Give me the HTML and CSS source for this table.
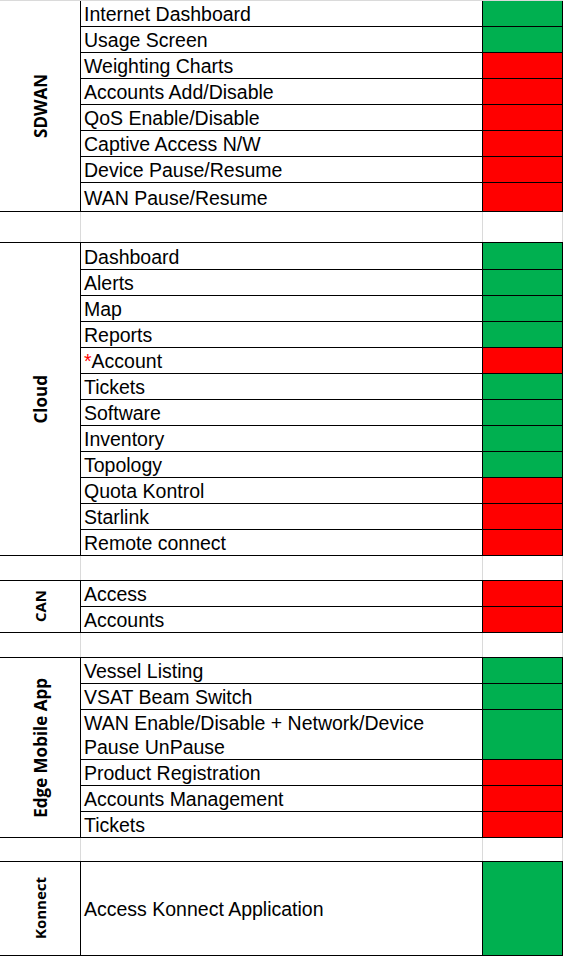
FILE: index.html
```html
<!DOCTYPE html>
<html>
<head>
<meta charset="utf-8">
<link rel="stylesheet" href="styles.css">
</head>
<body>
<div class="sheet">
  <section class="group">
    <div class="label"><span>SDWAN</span></div>
    <div class="rows">
      <div class="row"><div class="item">Internet Dashboard</div><div class="status ok"></div></div>
      <div class="row"><div class="item">Usage Screen</div><div class="status ok"></div></div>
      <div class="row"><div class="item">Weighting Charts</div><div class="status no"></div></div>
      <div class="row"><div class="item">Accounts Add/Disable</div><div class="status no"></div></div>
      <div class="row"><div class="item">QoS Enable/Disable</div><div class="status no"></div></div>
      <div class="row"><div class="item">Captive Access N/W</div><div class="status no"></div></div>
      <div class="row"><div class="item">Device Pause/Resume</div><div class="status no"></div></div>
      <div class="row h29"><div class="item">WAN Pause/Resume</div><div class="status no"></div></div>
    </div>
  </section>
  <div class="spacer h31"><div></div><div></div><div></div></div>
  <section class="group">
    <div class="label"><span>Cloud</span></div>
    <div class="rows">
      <div class="row h27"><div class="item">Dashboard</div><div class="status ok"></div></div>
      <div class="row"><div class="item">Alerts</div><div class="status ok"></div></div>
      <div class="row"><div class="item">Map</div><div class="status ok"></div></div>
      <div class="row"><div class="item">Reports</div><div class="status ok"></div></div>
      <div class="row"><div class="item"><span class="star">*</span>Account</div><div class="status no"></div></div>
      <div class="row"><div class="item">Tickets</div><div class="status ok"></div></div>
      <div class="row"><div class="item">Software</div><div class="status ok"></div></div>
      <div class="row"><div class="item">Inventory</div><div class="status ok"></div></div>
      <div class="row"><div class="item">Topology</div><div class="status ok"></div></div>
      <div class="row"><div class="item">Quota Kontrol</div><div class="status no"></div></div>
      <div class="row"><div class="item">Starlink</div><div class="status no"></div></div>
      <div class="row"><div class="item">Remote connect</div><div class="status no"></div></div>
    </div>
  </section>
  <div class="spacer h25"><div></div><div></div><div></div></div>
  <section class="group">
    <div class="label small"><span>CAN</span></div>
    <div class="rows">
      <div class="row"><div class="item">Access</div><div class="status no"></div></div>
      <div class="row"><div class="item">Accounts</div><div class="status no"></div></div>
    </div>
  </section>
  <div class="spacer h25"><div></div><div></div><div></div></div>
  <section class="group">
    <div class="label"><span>Edge Mobile App</span></div>
    <div class="rows">
      <div class="row"><div class="item">Vessel Listing</div><div class="status ok"></div></div>
      <div class="row"><div class="item">VSAT Beam Switch</div><div class="status ok"></div></div>
      <div class="row h50"><div class="item multi">WAN Enable/Disable + Network/Device<br>Pause UnPause</div><div class="status ok"></div></div>
      <div class="row"><div class="item">Product Registration</div><div class="status no"></div></div>
      <div class="row"><div class="item">Accounts Management</div><div class="status no"></div></div>
      <div class="row"><div class="item">Tickets</div><div class="status no"></div></div>
    </div>
  </section>
  <div class="spacer h24"><div></div><div></div><div></div></div>
  <section class="group">
    <div class="label small"><span>Konnect</span></div>
    <div class="rows">
      <div class="row h94"><div class="item middle">Access Konnect Application</div><div class="status ok"></div></div>
    </div>
  </section>
</div>
</body>
</html>
```

FILE: styles.css
```css
* { box-sizing: border-box; }
html, body { margin: 0; padding: 0; background: #fff; }
body { font-family: "Liberation Sans", Arial, sans-serif; color: #000; }

.sheet {
  width: 563px;
  border-top: 1px solid #dadada;
}

.group {
  display: grid;
  grid-template-columns: 81px 482px;
}

.label {
  border-right: 1px solid #000;
  border-bottom: 1px solid #000;
  display: flex;
  align-items: center;
  justify-content: center;
}
.label span {
  writing-mode: vertical-rl;
  transform: rotate(180deg);
  font-family: "Open Sans", sans-serif;
  font-weight: 700;
  font-size: 17px;
  line-height: 1;
  white-space: nowrap;
}
.label.small span { font-size: 15px; }

.rows { display: flex; flex-direction: column; }

.row {
  display: grid;
  grid-template-columns: 402px 80px;
  height: 26px;
}
.row.h27 { height: 27px; }
.row.h29 { height: 29px; }
.row.h29 .item { padding-bottom: 2px; }
.row.h50 { height: 50px; }
.row.h94 { height: 94px; }

.item {
  border-right: 1px solid #000;
  border-bottom: 1px solid #000;
  display: flex;
  align-items: flex-end;
  padding: 0 0 1px 3px;
  font-size: 19.5px;
  line-height: 22px;
  white-space: nowrap;
}
.item.multi {
  padding: 0 0 0 3px;
  line-height: 24px;
}
.item.middle { align-items: center; padding-bottom: 0; }
.star { color: #ff0000; }

.status {
  border-right: 1px solid #000;
  border-bottom: 1px solid #000;
}
.status.ok { background: #00b050; }
.status.no { background: #ff0000; }

.spacer {
  display: grid;
  grid-template-columns: 81px 402px 80px;
  border-bottom: 1px solid #000;
}
.spacer div { border-right: 1px solid #dadada; }
.spacer.h31 { height: 31px; }
.spacer.h25 { height: 25px; }
.spacer.h24 { height: 24px; }
```
